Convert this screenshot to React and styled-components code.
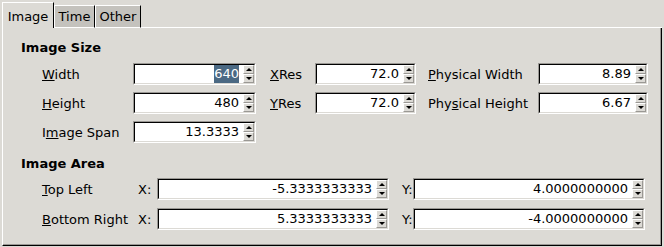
import styled, { createGlobalStyle } from 'styled-components';

const GlobalStyle = createGlobalStyle`
  html, body {
    margin: 0;
    padding: 0;
    background: #dcdad5;
  }
  body {
    font-family: "DejaVu Sans", "Liberation Sans", sans-serif;
    font-size: 13px;
    color: #000;
  }
`;

const Window = styled.div`
  width: 664px;
  height: 247px;
  box-sizing: border-box;
  padding: 2px 2px 1px 2px;
  display: flex;
  flex-direction: column;
`;

const TabBar = styled.div`
  display: flex;
  align-items: flex-end;
  height: 26px;
`;

const Tab = styled.div`
  box-sizing: border-box;
  display: flex;
  align-items: center;
  justify-content: center;
  width: ${p => p.w}px;
  height: ${p => (p.active ? 26 : 23)}px;
  padding-top: ${p => (p.active ? 1 : 0)}px;
  background: ${p => (p.active ? '#dcdad5' : '#c4c2bd')};
  border-top: 1px solid #fff;
  border-left: 1px solid #fff;
  border-right: 1px solid #000;
  border-bottom: ${p => (p.active ? 'none' : '1px solid #fff')};
`;

const TabFill = styled.div`
  flex: 1;
  border-bottom: 1px solid #fff;
`;

const Panel = styled.div`
  flex: 1;
  box-sizing: border-box;
  border-left: 1px solid #fff;
  border-right: 1px solid #000;
  border-bottom: 1px solid #000;
  box-shadow: inset -1px -1px 0 #9a9894;
  padding: 12px 0 0 18px;
`;

const Heading = styled.div`
  font-weight: bold;
  height: 15px;
  line-height: 15px;
`;

const SizeGrid = styled.div`
  display: grid;
  grid-template-columns: 91px 123px 14px 45px 101px 12px 110px 110px;
  grid-auto-rows: 22px;
  row-gap: 7px;
  margin: 8px 0 13px 21px;
  align-items: center;
`;

const AreaGrid = styled.div`
  display: grid;
  grid-template-columns: 96px 19px 232px 13px 11px 232px;
  grid-auto-rows: 22px;
  row-gap: 8px;
  margin: 7px 0 0 21px;
  align-items: center;
`;

const Label = styled.div`
  grid-column: ${p => p.col || 'auto'};
  white-space: nowrap;
`;

const Spin = styled.div`
  grid-column: ${p => p.col || 'auto'};
  box-sizing: border-box;
  height: 22px;
  border: 1px solid;
  border-color: #9a9894 #fff #fff #9a9894;
  display: flex;
`;

const SpinInner = styled.div`
  flex: 1;
  display: flex;
  border: 1px solid;
  border-color: #000 #dcdad5 #dcdad5 #000;
  background: #fff;
  min-width: 0;
`;

const Field = styled.div`
  flex: 1;
  display: flex;
  align-items: center;
  justify-content: flex-end;
  padding-right: 4px;
  line-height: 16px;
`;

const Selected = styled.span`
  background: #4b6983;
  color: #fff;
  padding: 1px 0;
`;

const Arrows = styled.div`
  width: 11px;
  display: flex;
  flex-direction: column;
  background: #dcdad5;
`;

const ArrowBtn = styled.div`
  flex: 1;
  box-sizing: border-box;
  border-top: 1px solid #fff;
  border-left: 1px solid #fff;
  border-right: 1px solid #9a9894;
  border-bottom: 1px solid #9a9894;
  display: flex;
  align-items: center;
  justify-content: center;

  &::after {
    content: '';
    width: 0;
    height: 0;
    border-left: 3px solid transparent;
    border-right: 3px solid transparent;
    ${p => (p.up ? 'border-bottom: 3px solid #000;' : 'border-top: 3px solid #000;')}
  }
`;

const SpinBox = ({ value, col, selected }) => (
  <Spin col={col}>
    <SpinInner>
      <Field>{selected ? <Selected>{value}</Selected> : value}</Field>
      <Arrows>
        <ArrowBtn up />
        <ArrowBtn />
      </Arrows>
    </SpinInner>
  </Spin>
);

const App = () => (
  <>
    <GlobalStyle />
    <Window>
      <TabBar>
        <Tab active w={52}>Image</Tab>
        <Tab w={41}>Time</Tab>
        <Tab w={46}>Other</Tab>
        <TabFill />
      </TabBar>
      <Panel>
        <Heading>Image Size</Heading>
        <SizeGrid>
          <Label><u>W</u>idth</Label>
          <SpinBox value="640" selected />
          <Label col={4}><u>X</u>Res</Label>
          <SpinBox value="72.0" />
          <Label col={7}><u>P</u>hysical Width</Label>
          <SpinBox value="8.89" />

          <Label><u>H</u>eight</Label>
          <SpinBox value="480" />
          <Label col={4}><u>Y</u>Res</Label>
          <SpinBox value="72.0" />
          <Label col={7}>Phy<u>s</u>ical Height</Label>
          <SpinBox value="6.67" />

          <Label>I<u>m</u>age Span</Label>
          <SpinBox value="13.3333" />
        </SizeGrid>
        <Heading>Image Area</Heading>
        <AreaGrid>
          <Label><u>T</u>op Left</Label>
          <Label>X:</Label>
          <SpinBox value="-5.3333333333" />
          <Label col={5}>Y:</Label>
          <SpinBox value="4.0000000000" />

          <Label><u>B</u>ottom Right</Label>
          <Label>X:</Label>
          <SpinBox value="5.3333333333" />
          <Label col={5}>Y:</Label>
          <SpinBox value="-4.0000000000" />
        </AreaGrid>
      </Panel>
    </Window>
  </>
);

export default App;
